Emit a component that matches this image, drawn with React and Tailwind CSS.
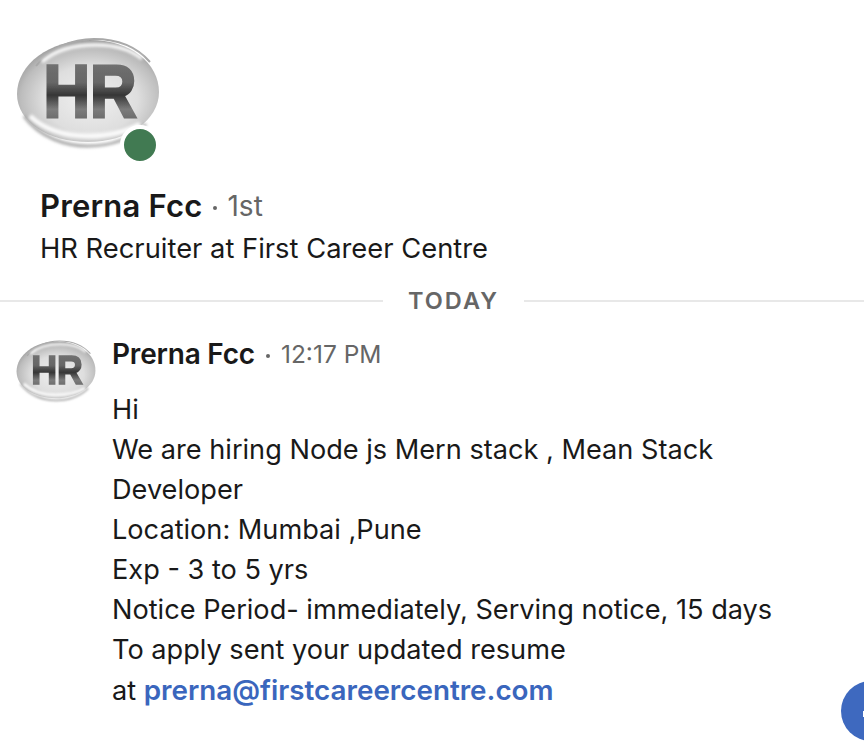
import React, { useId } from "react";

function Logo({ className }) {
  const raw = useId();
  const id = raw.replace(/[^a-zA-Z0-9]/g, "");
  return (
    <svg viewBox="0 0 144 116" className={className}>
      <defs>
        <radialGradient id={id + "b"} cx="52%" cy="58%" r="60%">
          <stop offset="0%" stopColor="#f0f0f0" />
          <stop offset="55%" stopColor="#dedede" />
          <stop offset="82%" stopColor="#bdbdbd" />
          <stop offset="100%" stopColor="#969696" />
        </radialGradient>
        <linearGradient id={id + "l"} x1="0" y1="0" x2="0" y2="1">
          <stop offset="0%" stopColor="#787878" />
          <stop offset="40%" stopColor="#666666" />
          <stop offset="55%" stopColor="#363636" />
          <stop offset="72%" stopColor="#7c7c7c" />
          <stop offset="100%" stopColor="#555555" />
        </linearGradient>
        <filter id={id + "s"} x="-10%" y="-10%" width="120%" height="120%">
          <feGaussianBlur stdDeviation="0.7" />
        </filter>
        <filter id={id + "w"} x="-20%" y="-20%" width="140%" height="140%">
          <feGaussianBlur stdDeviation="1.5" />
        </filter>
      </defs>
      <path d="M1 58C1 28 34 4 74 4C114 4 143 27 143 56C143 84 112 106 72 106C32 106 1 86 1 58Z" fill={`url(#${id}b)`} filter={`url(#${id}s)`} />
      <path d="M20 30C34 12 56 3 78 3C100 3 120 10 134 26" fill="none" stroke="#a8a8a8" strokeWidth="2" filter={`url(#${id}s)`} />
      <path d="M26 26C40 13 60 9 80 9C98 9 114 13 126 23" fill="none" stroke="#fbfbfb" strokeWidth="3.5" filter={`url(#${id}w)`} />
      <path d="M8 80C24 102 50 110 72 110C96 110 116 102 130 88" fill="none" stroke="#a8a8a8" strokeWidth="3" filter={`url(#${id}w)`} />
      <path d="M14 80C30 95 50 100 72 100C92 100 110 96 124 88" fill="none" stroke="#fafafa" strokeWidth="5" filter={`url(#${id}w)`} />
      <text
        x="74"
        y="80.5"
        textAnchor="middle"
        fontFamily="'Liberation Sans', sans-serif"
        fontWeight="700"
        fontSize="74"
        textLength="93"
        lengthAdjust="spacingAndGlyphs"
        fill={`url(#${id}l)`}
        stroke={`url(#${id}l)`}
        strokeWidth="3"
        filter={`url(#${id}s)`}
      >
        HR
      </text>
    </svg>
  );
}

const lines = [
  "Hi",
  "We are hiring Node js Mern stack , Mean Stack",
  "Developer",
  "Location: Mumbai ,Pune",
  "Exp - 3 to 5 yrs",
  "Notice Period- immediately, Serving notice, 15 days",
  "To apply sent your updated resume",
];

export default function App() {
  return (
    <div className="relative h-[742px] w-[864px] overflow-hidden bg-white font-['Inter',sans-serif] text-[#191919]">
      <div className="pl-4 pt-9">
        <div className="relative h-[116px] w-[144px]">
          <Logo className="h-[116px] w-[144px]" />
          <div className="absolute left-[104px] top-[89px] h-10 w-10 rounded-full border-4 border-white bg-[#417a52]" />
        </div>
      </div>
      <div className="pl-10 pt-[34px]">
        <div className="flex h-[40px] items-center">
          <span className="text-[31px] font-semibold tracking-[0.2px]">Prerna Fcc</span>
          <span className="ml-[11px] mt-[3px] h-1 w-1 rounded-full bg-[#666666]" />
          <span className="ml-[10px] text-[28px] text-[#666666]">1st</span>
        </div>
        <div className="mt-[3px] h-[40px] text-[27.35px] leading-[40px]">HR Recruiter at First Career Centre</div>
      </div>
      <div className="mt-[17px] flex items-center">
        <div className="h-[2px] w-[383px] bg-[#e8e8e8]" />
        <div className="w-[141px] text-center text-[23.5px] font-semibold leading-[30px] tracking-[2px] text-[#666666]">TODAY</div>
        <div className="h-[2px] flex-1 bg-[#e8e8e8]" />
      </div>
      <div className="flex pl-4 pt-[20px]">
        <Logo className="mt-[3px] h-[65px] w-[80px] shrink-0" />
        <div className="pl-4">
          <div className="flex h-[36px] items-center">
            <span className="text-[28px] font-semibold tracking-[-0.2px]">Prerna Fcc</span>
            <span className="ml-[11px] mt-[3px] h-1 w-1 rounded-full bg-[#666666]" />
            <span className="ml-[11px] text-[24.5px] text-[#666666]">12:17 PM</span>
          </div>
          <div className="pt-[18px] text-[27.15px] leading-[40px]">
            {lines.map((l) => (
              <div key={l}>{l}</div>
            ))}
            <div>
              at <span className="text-[27.8px] font-semibold text-[#3a66bd]">prerna@firstcareercentre.com</span>
            </div>
          </div>
        </div>
      </div>
      <div className="absolute left-[841px] top-[681px] h-[60px] w-[60px] rounded-full bg-[#3e69bf]">
        <div className="absolute left-[22px] top-[30px] h-[6px] w-[4px] bg-white" />
      </div>
    </div>
  );
}
